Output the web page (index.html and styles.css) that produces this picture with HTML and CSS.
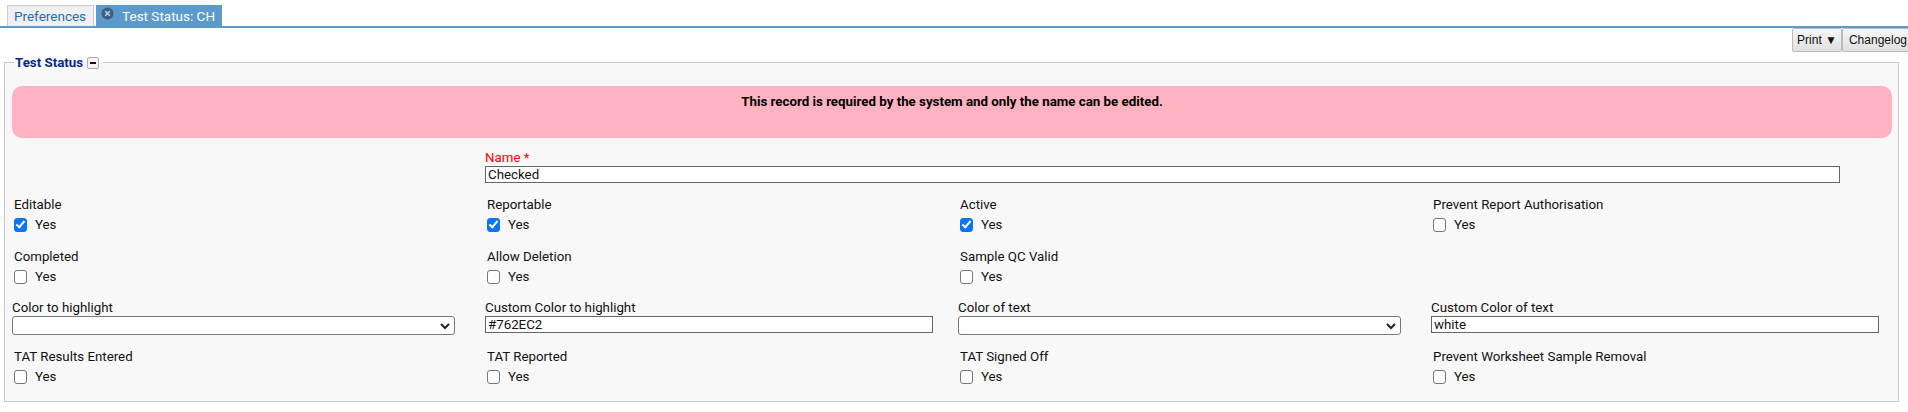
FILE: index.html
```html
<!DOCTYPE html>
<html lang="en">
<head>
	<meta charset="UTF-8">
	<title>Test Status: CH</title>
	<link rel="stylesheet" href="styles.css">
</head>
<body>
	<div class="tabs">
		<a class="tab">Preferences</a>
		<a class="tab active">
			<svg class="tab-close" width="13" height="13" viewBox="0 0 14 14">
				<circle cx="7" cy="7" r="6.5" fill="#3f5f7f"/>
				<path d="M4.5 4.5l5 5M9.5 4.5l-5 5" stroke="#c5d3e0" stroke-width="1.5"/>
			</svg>
			Test Status: CH
		</a>
	</div>

	<div class="toolbar">
		<button class="tool-btn print-btn">Print &#9660;</button>
		<button class="tool-btn">Changelog</button>
	</div>

	<fieldset class="panel">
		<legend class="panel-title">Test Status <button class="collapse" aria-label="Collapse"></button></legend>

		<div class="notice">This record is required by the system and only the name can be edited.</div>

		<div class="form-grid">
			<div class="field name-field">
				<label class="required">Name *</label>
				<input class="text-input" type="text" value="Checked">
			</div>

			<div class="field check-field row-1">
				<label>Editable</label>
				<span class="yes"><input type="checkbox" checked>Yes</span>
			</div>
			<div class="field check-field row-1">
				<label>Reportable</label>
				<span class="yes"><input type="checkbox" checked>Yes</span>
			</div>
			<div class="field check-field row-1">
				<label>Active</label>
				<span class="yes"><input type="checkbox" checked>Yes</span>
			</div>
			<div class="field check-field row-1">
				<label>Prevent Report Authorisation</label>
				<span class="yes"><input type="checkbox">Yes</span>
			</div>

			<div class="field check-field row-2">
				<label>Completed</label>
				<span class="yes"><input type="checkbox">Yes</span>
			</div>
			<div class="field check-field row-2">
				<label>Allow Deletion</label>
				<span class="yes"><input type="checkbox">Yes</span>
			</div>
			<div class="field check-field row-2">
				<label>Sample QC Valid</label>
				<span class="yes"><input type="checkbox">Yes</span>
			</div>
			<div class="field check-field row-2"></div>

			<div class="field row-3">
				<label>Color to highlight</label>
				<select class="select-input"><option></option></select>
			</div>
			<div class="field row-3">
				<label>Custom Color to highlight</label>
				<input class="text-input" type="text" value="#762EC2">
			</div>
			<div class="field row-3">
				<label>Color of text</label>
				<select class="select-input"><option></option></select>
			</div>
			<div class="field row-3">
				<label>Custom Color of text</label>
				<input class="text-input" type="text" value="white">
			</div>

			<div class="field check-field">
				<label>TAT Results Entered</label>
				<span class="yes"><input type="checkbox">Yes</span>
			</div>
			<div class="field check-field">
				<label>TAT Reported</label>
				<span class="yes"><input type="checkbox">Yes</span>
			</div>
			<div class="field check-field">
				<label>TAT Signed Off</label>
				<span class="yes"><input type="checkbox">Yes</span>
			</div>
			<div class="field check-field">
				<label>Prevent Worksheet Sample Removal</label>
				<span class="yes"><input type="checkbox">Yes</span>
			</div>
		</div>
	</fieldset>
</body>
</html>
```

FILE: styles.css
```css
html, body {
	overflow: hidden;
}
body {
	margin: 0;
	background-color: #fff;
	color: #111;
	font-family: Roboto, "Liberation Sans", sans-serif;
	font-size: 13.3px;
}

/* tabs */
.tabs {
	display: flex;
	gap: 2px;
	height: 21px;
	margin-top: 5px;
	padding-left: 7px;
	border-bottom: 2px solid #5b9aca;
}
.tab {
	display: flex;
	align-items: center;
	box-sizing: border-box;
	height: 21px;
	padding: 0 7px 0 6px;
	background-color: #f0f0f0;
	border: 1px solid #ccc;
	border-bottom: 0;
	color: #1a6fc0;
	font-size: 13.5px;
}
.tab.active {
	padding: 0 7px 0 5px;
	background-color: #5b9aca;
	border: 0;
	color: #fff;
	gap: 8px;
}
.tab-close {
	margin-top: -5px;
}

/* buttons at the top right */
.toolbar {
	display: flex;
	justify-content: flex-end;
	height: 24px;
	margin-right: -6px;
}
.tool-btn {
	height: 24px;
	padding: 0 6px;
	background: linear-gradient(#f6f6f6, #e0e0e0);
	border: 1px solid #bbb;
	border-radius: 2px;
	color: #111;
	font-family: "Liberation Sans", Arial, sans-serif;
	font-size: 12px;
}
.print-btn {
	padding: 0 4px 0 4px;
}

/* panel */
.panel {
	min-width: 0;
	margin: 3px 9px 0 4px;
	padding: 16px 6px 16px 7px;
	background-color: #f8f8f8;
	border: 1px solid #c8c8c8;
}
.panel-title {
	display: flex;
	align-items: center;
	gap: 4px;
	margin-left: 2px;
	padding: 0 4px 0 1px;
	color: #0a2a8a;
	font-size: 13.3px;
	font-weight: bold;
}
.collapse {
	position: relative;
	width: 12px;
	height: 12px;
	padding: 0;
	background-color: #f4f4f4;
	border: 1px solid #aaa;
	border-radius: 2px;
}
.collapse::after {
	content: "";
	position: absolute;
	left: 2px;
	top: 4px;
	width: 6px;
	height: 2px;
	background-color: #111;
}

.notice {
	height: 52px;
	padding-top: 8px;
	box-sizing: border-box;
	background-color: #ffb3c1;
	border-radius: 10px;
	color: #000;
	font-weight: bold;
	text-align: center;
}

/* form */
.form-grid {
	display: grid;
	grid-template-columns: repeat(4, 448px);
	column-gap: 25px;
	margin-top: 11px;
}
.field {
	display: flex;
	flex-direction: column;
}
.name-field {
	grid-column: 2 / span 3;
	height: 47px;
	padding-right: 39px;
}
.row-1 {
	height: 52px;
}
.row-2 {
	height: 51px;
}
.row-3 {
	height: 49px;
}
.field label {
	height: 17px;
	line-height: 17px;
}
.check-field {
	padding-left: 2px;
}
.required {
	color: #f00;
}
.text-input {
	box-sizing: border-box;
	width: 100%;
	height: 17px;
	padding: 0 2px;
	background-color: #fff;
	border: 1px solid #666;
	color: #111;
	font-family: inherit;
	font-size: 13.3px;
}
.select-input {
	appearance: none;
	box-sizing: border-box;
	width: 443px;
	height: 19px;
	padding: 0 2px;
	background: #fff url("data:image/svg+xml,%3Csvg xmlns='http://www.w3.org/2000/svg' width='10' height='8'%3E%3Cpath d='M1 2l4 4 4-4' fill='none' stroke='%23222' stroke-width='2'/%3E%3C/svg%3E") no-repeat right 4px center;
	border: 1px solid #777;
	border-radius: 3px;
}
.yes {
	display: flex;
	align-items: center;
	gap: 8px;
	height: 17px;
	margin-top: 3px;
}
.yes input {
	appearance: none;
	position: relative;
	width: 13px;
	height: 14px;
	margin: 0;
	background-color: #fff;
	border: 1px solid #777;
	border-radius: 3px;
}
.yes input:checked {
	background-color: #0a76f6;
	border-color: #0a76f6;
}
.yes input:checked::after {
	content: "";
	position: absolute;
	left: 3px;
	top: 0;
	width: 3px;
	height: 7px;
	border: solid #fff;
	border-width: 0 2px 2px 0;
	transform: rotate(40deg);
}
```
